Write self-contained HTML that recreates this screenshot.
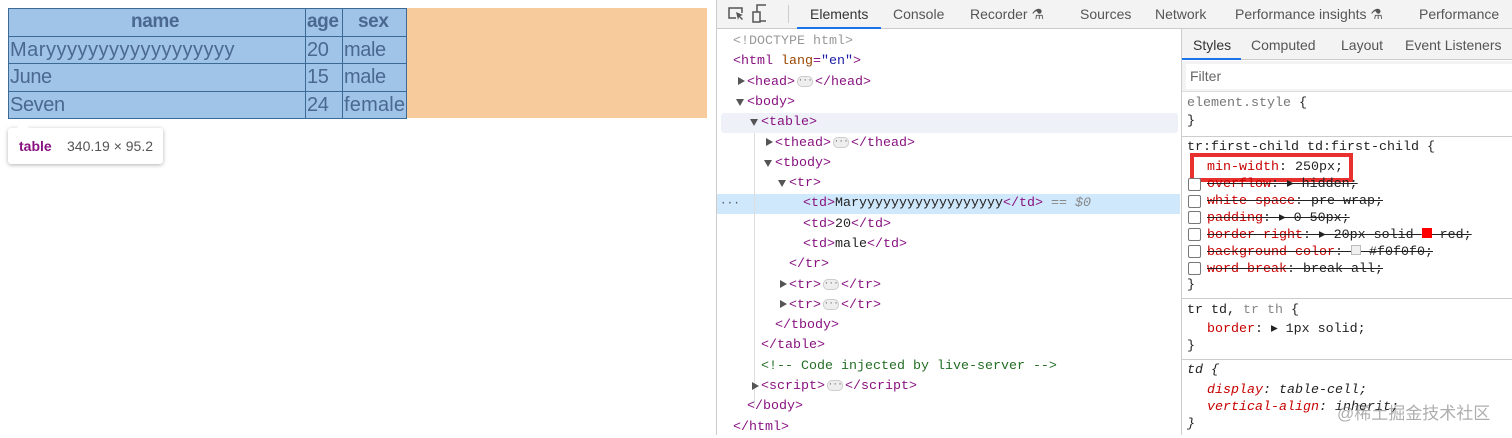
<!DOCTYPE html>
<html><head><style>
*{margin:0;padding:0;box-sizing:border-box}
body{width:1512px;height:435px;position:relative;overflow:hidden;background:#fff;font-family:"Liberation Sans",sans-serif}
.a{position:absolute;white-space:pre}
.c{position:absolute;border:1px solid #3c6a96;}
.t{position:absolute;font-size:20px;color:#4a6890;line-height:27px;white-space:pre;letter-spacing:-0.4px}
.m{font-family:"Liberation Mono",monospace;font-size:13.33px;line-height:20px}
.tg{color:#881280}.at{color:#994500}.av{color:#1a1aa6}.tx{color:#222}
.tri{position:absolute;width:0;height:0;border-left:4px solid transparent;border-right:4px solid transparent;border-top:7px solid #555}
.trr{position:absolute;width:0;height:0;border-top:4px solid transparent;border-bottom:4px solid transparent;border-left:7px solid #555}
.dots{display:inline-block;width:16px;height:11px;border:1px solid #ccc;border-radius:5px;background:#eee;font-size:8px;line-height:7px;text-align:center;vertical-align:middle;color:#555;margin:0 2px}
.s{font-family:"Liberation Mono",monospace;font-size:13.33px;line-height:17px}
.pn{color:#c80000}
.cb{position:absolute;width:13px;height:13px;border:1px solid #777;border-radius:2px;background:#fff}
.st{text-decoration:line-through}
</style></head><body>
<div class="a" style="left:8px;top:8px;width:399px;height:110px;background:#a0c4e8"></div>
<div class="a" style="left:407px;top:8px;width:300px;height:110px;background:#f8cb9c"></div>
<div class="c" style="left:8px;top:8px;width:399px;height:111px"></div>
<div class="a" style="left:305px;top:8px;width:1px;height:110px;background:#3c6a96"></div>
<div class="a" style="left:342px;top:8px;width:1px;height:110px;background:#3c6a96"></div>
<div class="a" style="left:8px;top:36px;width:399px;height:1px;background:#3c6a96"></div>
<div class="a" style="left:8px;top:63px;width:399px;height:1px;background:#3c6a96"></div>
<div class="a" style="left:8px;top:91px;width:399px;height:1px;background:#3c6a96"></div>
<div class="t" style="left:131px;top:8px;font-weight:bold;font-size:19px">name</div>
<div class="t" style="left:307px;top:8px;font-weight:bold;font-size:19px">age</div>
<div class="t" style="left:358px;top:8px;font-weight:bold;font-size:19px">sex</div>
<div class="t" style="left:10px;top:37px;letter-spacing:0.5px">Maryyyyyyyyyyyyyyyyyy</div>
<div class="t" style="left:307px;top:37px">20</div>
<div class="t" style="left:344px;top:37px">male</div>
<div class="t" style="left:10px;top:64px">June</div>
<div class="t" style="left:307px;top:64px">15</div>
<div class="t" style="left:344px;top:64px">male</div>
<div class="t" style="left:10px;top:92px">Seven</div>
<div class="t" style="left:307px;top:92px">24</div>
<div class="t" style="left:344px;top:92px;letter-spacing:0.2px">female</div>
<div class="a" style="left:8px;top:128px;width:155px;height:36px;background:#fff;border-radius:3px;box-shadow:0 1px 4px rgba(0,0,0,.3)"></div>
<div class="a" style="left:16px;top:122px;width:0;height:0;border-left:7px solid transparent;border-right:7px solid transparent;border-bottom:7px solid #fff"></div>
<div class="a" style="left:19px;top:138px;font-size:14px;color:#881280;font-weight:bold">table</div>
<div class="a" style="left:67px;top:138px;font-size:14px;color:#555">340.19 × 95.2</div>
<div class="a" style="left:716px;top:0;width:796px;height:435px;background:#fff;border-left:1px solid #ccc"></div>
<div class="a" style="left:717px;top:0;width:795px;height:29px;background:#f3f3f3;border-bottom:1px solid #cbcbcb"></div>
<svg class="a" style="left:726px;top:4px" width="40" height="20"><path d="M10 14H3V4h13v5" fill="none" stroke="#555" stroke-width="1.5"/><path d="M10 8l7 3-3 1 3 3-1 1-3-3-1 3z" fill="#555"/><rect x="31" y="1" width="10" height="16" fill="none" stroke="#555" stroke-width="1.5"/><rect x="27" y="8" width="7" height="10" fill="#f3f3f3" stroke="#555" stroke-width="1.5"/></svg>
<div class="a" style="left:788px;top:5px;width:1px;height:18px;background:#ccc"></div>
<div class="a" style="left:810px;top:6px;font-size:14px;color:#333">Elements</div>
<div class="a" style="left:797px;top:27px;width:84px;height:2px;background:#1a73e8"></div>
<div class="a" style="left:893px;top:6px;font-size:14px;color:#555">Console</div>
<div class="a" style="left:970px;top:6px;font-size:14px;color:#555">Recorder ⚗</div>
<div class="a" style="left:1080px;top:6px;font-size:14px;color:#555">Sources</div>
<div class="a" style="left:1155px;top:6px;font-size:14px;color:#555">Network</div>
<div class="a" style="left:1235px;top:6px;font-size:14px;color:#555">Performance insights ⚗</div>
<div class="a" style="left:1419px;top:6px;font-size:14px;color:#555">Performance</div>
<div class="a" style="left:721px;top:113px;width:457px;height:20px;background:#eef1f8;border-radius:3px"></div>
<div class="a" style="left:717px;top:194px;width:463px;height:20px;background:#cfe8fc"></div>
<div class="a" style="left:754px;top:133px;width:1px;height:273px;background:#ddd"></div>
<div class="a m" style="left:720px;top:194px;color:#555;font-size:11px">···</div>
<div class="a m" style="left:733px;top:32px;color:#999">&lt;!DOCTYPE html&gt;</div>
<div class="a m tg" style="left:733px;top:52px">&lt;html <span class="at">lang</span>=<span class="av">"en"</span>&gt;</div>
<div class="trr" style="left:738px;top:77px"></div>
<div class="a m tg" style="left:747px;top:73px">&lt;head&gt;<span class="dots">···</span>&lt;/head&gt;</div>
<div class="tri" style="left:736px;top:99px"></div>
<div class="a m tg" style="left:747px;top:93px">&lt;body&gt;</div>
<div class="tri" style="left:750px;top:119px"></div>
<div class="a m tg" style="left:761px;top:113px">&lt;table&gt;</div>
<div class="trr" style="left:766px;top:138px"></div>
<div class="a m tg" style="left:775px;top:134px">&lt;thead&gt;<span class="dots">···</span>&lt;/thead&gt;</div>
<div class="tri" style="left:764px;top:160px"></div>
<div class="a m tg" style="left:775px;top:154px">&lt;tbody&gt;</div>
<div class="tri" style="left:778px;top:180px"></div>
<div class="a m tg" style="left:789px;top:174px">&lt;tr&gt;</div>
<div class="a m tg" style="left:803px;top:194px">&lt;td&gt;<span class="tx">Maryyyyyyyyyyyyyyyyyy</span>&lt;/td&gt; <i style="color:#888">== $0</i></div>
<div class="a m tg" style="left:803px;top:215px">&lt;td&gt;<span class="tx">20</span>&lt;/td&gt;</div>
<div class="a m tg" style="left:803px;top:235px">&lt;td&gt;<span class="tx">male</span>&lt;/td&gt;</div>
<div class="a m tg" style="left:789px;top:255px">&lt;/tr&gt;</div>
<div class="trr" style="left:780px;top:280px"></div>
<div class="a m tg" style="left:789px;top:276px">&lt;tr&gt;<span class="dots">···</span>&lt;/tr&gt;</div>
<div class="trr" style="left:780px;top:300px"></div>
<div class="a m tg" style="left:789px;top:296px">&lt;tr&gt;<span class="dots">···</span>&lt;/tr&gt;</div>
<div class="a m tg" style="left:775px;top:316px">&lt;/tbody&gt;</div>
<div class="a m tg" style="left:761px;top:336px">&lt;/table&gt;</div>
<div class="a m" style="left:761px;top:357px;color:#236e25">&lt;!-- Code injected by live-server --&gt;</div>
<div class="trr" style="left:752px;top:382px"></div>
<div class="a m tg" style="left:761px;top:377px">&lt;script&gt;<span class="dots">···</span>&lt;/script&gt;</div>
<div class="a m tg" style="left:747px;top:397px">&lt;/body&gt;</div>
<div class="a m tg" style="left:733px;top:418px">&lt;/html&gt;</div>
<div class="a" style="left:1181px;top:29px;width:1px;height:406px;background:#ccc"></div>
<div class="a" style="left:1182px;top:29px;width:330px;height:31px;background:#f3f3f3;border-bottom:1px solid #cbcbcb"></div>
<div class="a" style="left:1193px;top:37px;font-size:14px;color:#333">Styles</div>
<div class="a" style="left:1182px;top:58px;width:59px;height:2px;background:#1a73e8"></div>
<div class="a" style="left:1251px;top:37px;font-size:14px;color:#555">Computed</div>
<div class="a" style="left:1341px;top:37px;font-size:14px;color:#555">Layout</div>
<div class="a" style="left:1405px;top:37px;font-size:14px;color:#555">Event Listeners</div>
<div class="a" style="left:1182px;top:61px;width:330px;height:31px;background:#f3f3f3;border-bottom:1px solid #ddd"></div>
<div class="a" style="left:1186px;top:64px;width:326px;height:25px;background:#fff"></div>
<div class="a" style="left:1190px;top:68px;font-size:14px;color:#666">Filter</div>
<div class="a s" style="left:1187px;top:95px;color:#777">element.style <span style="color:#222">{</span></div>
<div class="a s" style="left:1187px;top:113px;color:#222">}</div>
<div class="a" style="left:1182px;top:136px;width:330px;height:1px;background:#ccc"></div>
<div class="a s" style="left:1187px;top:139px;color:#222">tr:first-child td:first-child {</div>
<div class="a" style="left:1190px;top:153px;width:163px;height:29px;border:4px solid #e8302f"></div>
<div class="a s" style="left:1207px;top:159px;color:#222"><span class="pn">min-width</span>: 250px;</div>
<div class="cb" style="left:1188px;top:178px"></div>
<div class="a s st" style="left:1207px;top:176px;color:#222"><span class="pn">overflow</span>: ▸ hidden;</div>
<div class="cb" style="left:1188px;top:195px"></div>
<div class="a s st" style="left:1207px;top:193px;color:#222"><span class="pn">white-space</span>: pre-wrap;</div>
<div class="cb" style="left:1188px;top:211px"></div>
<div class="a s st" style="left:1207px;top:210px;color:#222"><span class="pn">padding</span>: ▸ 0 50px;</div>
<div class="cb" style="left:1188px;top:228px"></div>
<div class="a s st" style="left:1207px;top:227px;color:#222"><span class="pn">border-right</span>: ▸ 20px solid <span style="display:inline-block;width:10px;height:10px;background:red"></span> red;</div>
<div class="cb" style="left:1188px;top:245px"></div>
<div class="a s st" style="left:1207px;top:244px;color:#222"><span class="pn">background-color</span>: <span style="display:inline-block;width:10px;height:10px;background:#f0f0f0;border:1px solid #bbb"></span> #f0f0f0;</div>
<div class="cb" style="left:1188px;top:262px"></div>
<div class="a s st" style="left:1207px;top:261px;color:#222"><span class="pn">word-break</span>: break-all;</div>
<div class="a s" style="left:1187px;top:277px;color:#222">}</div>
<div class="a" style="left:1182px;top:298px;width:330px;height:1px;background:#ccc"></div>
<div class="a s" style="left:1187px;top:302px;color:#222">tr td, <span style="color:#888">tr th</span> {</div>
<div class="a s" style="left:1207px;top:321px;color:#222"><span class="pn">border</span>: ▸ 1px solid;</div>
<div class="a s" style="left:1187px;top:338px;color:#222">}</div>
<div class="a" style="left:1182px;top:359px;width:330px;height:1px;background:#ccc"></div>
<div class="a s" style="left:1187px;top:362px;color:#222;font-style:italic">td {</div>
<div class="a s" style="left:1207px;top:382px;color:#222;font-style:italic"><span class="pn">display</span>: table-cell;</div>
<div class="a s" style="left:1207px;top:399px;color:#222;font-style:italic"><span class="pn">vertical-align</span>: inherit;</div>
<div class="a s" style="left:1187px;top:416px;color:#222;font-style:italic">}</div>
<div class="a" style="left:1337px;top:399px;font-size:17px;color:rgba(120,120,120,.6);font-family:'Liberation Sans','Noto Sans CJK SC',sans-serif">@稀土掘金技术社区</div>
</body></html>
